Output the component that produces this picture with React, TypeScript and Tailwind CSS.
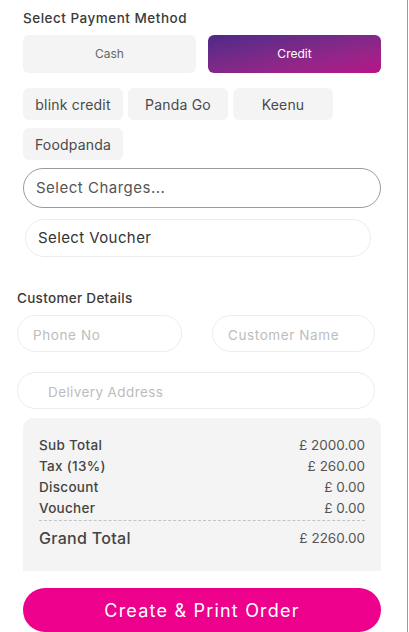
import { useState } from "react";

const methods = ["Cash", "Credit"];
const creditTypes = ["blink credit", "Panda Go", "Keenu", "Foodpanda"];

const totals = [
  { label: "Sub Total", value: "£ 2000.00" },
  { label: "Tax (13%)", value: "£ 260.00" },
  { label: "Discount", value: "£ 0.00" },
  { label: "Voucher", value: "£ 0.00" },
];

const App = () => {
  const [method, setMethod] = useState("Credit");

  return (
    <div className="w-[409px] h-[632px] bg-white overflow-hidden font-['Inter',sans-serif]">
      <div className="w-[408px] h-full border-r border-[#9a9a9a] flex flex-col">
        <div className="pl-[23px] pr-[26px] pt-[10px]">
          <h3 className="text-[13.5px] font-medium text-[#3a3a3a] leading-4 tracking-[0.5px]">
            Select Payment Method
          </h3>

          <div className="mt-[9px] grid grid-cols-2 gap-3">
            {methods.map((m) =>
              m === method ? (
                <button
                  key={m}
                  onClick={() => setMethod(m)}
                  className="h-[38px] rounded-md text-[12px] text-white bg-gradient-to-br from-[#4e2888] to-[#b80f88]"
                >
                  {m}
                </button>
              ) : (
                <button
                  key={m}
                  onClick={() => setMethod(m)}
                  className="h-[38px] rounded-md text-[12px] text-[#666] bg-[#f4f4f4]"
                >
                  {m}
                </button>
              )
            )}
          </div>

          <div className="mt-[15px] flex flex-wrap gap-x-[5px] gap-y-2">
            {creditTypes.map((c) => (
              <div
                key={c}
                className="w-[100px] h-8 rounded-md bg-[#f4f4f4] flex items-center justify-center text-[14px] text-[#4a4a4a] tracking-[0.2px]"
              >
                {c}
              </div>
            ))}
          </div>

          <div className="mt-2 h-10 rounded-full border border-[#9c9c9c] flex items-center pl-[12px] text-[15px] text-[#555] tracking-[0.5px]">
            Select Charges...
          </div>

          <div className="mt-[11px] ml-[2px] mr-[10px] h-[38px] rounded-full border border-[#ececec] flex items-center pl-[12px] text-[15px] text-[#333] tracking-[0.4px]">
            Select Voucher
          </div>
        </div>

        <div className="pl-[17px] pr-[32px] mt-[33px]">
          <h3 className="text-[13.5px] font-medium text-[#3a3a3a] leading-4 tracking-[0.3px]">
            Customer Details
          </h3>

          <div className="mt-[9px] flex gap-[30px]">
            <input
              placeholder="Phone No"
              className="w-[165px] h-[37px] rounded-full border border-[#ececec] pl-[15px] pt-[3px] text-[13.5px] tracking-[0.6px] text-[#333] placeholder-[#bdbdbd] outline-none"
            />
            <input
              placeholder="Customer Name"
              className="flex-1 min-w-0 h-[37px] rounded-full border border-[#ececec] pl-[15px] pt-[3px] text-[13.5px] tracking-[0.6px] text-[#333] placeholder-[#bdbdbd] outline-none"
            />
          </div>

          <input
            placeholder="Delivery Address"
            className="mt-5 w-full h-[37px] rounded-full border border-[#ececec] pl-[30px] pt-[3px] text-[13.5px] tracking-[0.4px] text-[#333] placeholder-[#bdbdbd] outline-none"
          />
        </div>

        <div className="pl-[23px] pr-[26px] mt-[9px]">
          <div className="h-[153px] rounded-t-[10px] bg-[#f4f4f4] px-4 pt-[17px]">
            {totals.map((t) => (
              <div key={t.label} className="flex justify-between items-center h-[21px]">
                <span className="text-[13.5px] font-medium text-[#444] tracking-[0.3px]">{t.label}</span>
                <span className="text-[13.5px] text-[#555]">{t.value}</span>
              </div>
            ))}
            <div className="mt-[1px] border-t border-dashed border-[#c4c4c4]" />
            <div className="flex justify-between items-center h-[34px]">
              <span className="text-[16px] font-medium text-[#444] tracking-[0.3px]">Grand Total</span>
              <span className="text-[13.5px] text-[#555]">£ 2260.00</span>
            </div>
          </div>

          <button className="mt-[17px] w-full h-[44px] rounded-full bg-[#ec008c] text-white text-[18px] tracking-[1.2px]">
            Create &amp; Print Order
          </button>
        </div>
      </div>
    </div>
  );
};

export default App;
